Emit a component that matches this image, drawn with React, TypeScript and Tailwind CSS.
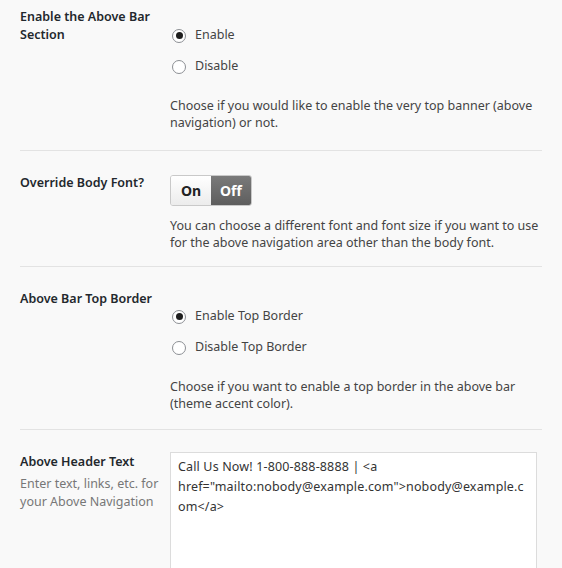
import React from "react";

function Radio({ label, checked }: { label: string; checked?: boolean }) {
  return (
    <label className="flex items-center h-[31px]">
      <span className="ml-[2px] w-[14px] h-[14px] rounded-full border border-[#8c8f94] bg-white flex items-center justify-center">
        {checked && <span className="w-[7px] h-[7px] rounded-full bg-[#1e1e1e]" />}
      </span>
      <span className="ml-[9px]">{label}</span>
    </label>
  );
}

function Row({
  label,
  sub,
  children,
  last,
}: {
  label: string;
  sub?: string;
  children: React.ReactNode;
  last?: boolean;
}) {
  return (
    <div className={`grid grid-cols-[150px_1fr] ${last ? "" : "border-b border-[#e3e3e3]"}`}>
      <div className="pt-[23px] pr-1">
        <div className="font-semibold text-[#23282d] leading-[18px]">{label}</div>
        {sub && <div className="mt-[4px] text-[#777] leading-[18px]">{sub}</div>}
      </div>
      {children}
    </div>
  );
}

export default function App() {
  return (
    <div
      className="min-h-[568px] bg-[#f9f9f9] text-[12.5px] text-[#444] overflow-hidden"
      style={{ fontFamily: '"Noto Sans", "Open Sans", sans-serif' }}
    >
      <div className="w-[542px] pl-5 -mt-[15px]">
        <Row label="Enable the Above Bar Section">
          <div className="pt-[35px] pb-[19px]">
            <Radio label="Enable" checked />
            <Radio label="Disable" />
            <p className="mt-[15px] leading-[17px]">
              Choose if you would like to enable the very top banner (above navigation) or not.
            </p>
          </div>
        </Row>
        <Row label="Override Body Font?">
          <div className="pt-[24px] pb-[15px]">
            <div className="flex w-[82px] h-[31px] rounded-[3px] border border-[#c9c9c9] overflow-hidden font-bold text-[14px]">
              <div className="w-[40px] flex items-center justify-center bg-gradient-to-b from-white to-[#ececec] text-[#222]">
                On
              </div>
              <div className="flex-1 flex items-center justify-center bg-gradient-to-b from-[#7a7a7a] to-[#5e5e5e] text-white">
                Off
              </div>
            </div>
            <p className="mt-[11px] leading-[17px]">
              You can choose a different font and font size if you want to use for the above navigation area other than the body font.
            </p>
          </div>
        </Row>
        <Row label="Above Bar Top Border">
          <div className="pt-[34px] pb-[17px]">
            <Radio label="Enable Top Border" checked />
            <Radio label="Disable Top Border" />
            <p className="mt-[15px] leading-[17px]">
              Choose if you want to enable a top border in the above bar (theme accent color).
            </p>
          </div>
        </Row>
        <Row label="Above Header Text" sub="Enter text, links, etc. for your Above Navigation" last>
          <div className="pt-[22px]">
            <textarea
              className="block w-[367px] h-[140px] bg-white border border-[#dcdcdc] px-[7px] py-[4px] text-[12.5px] tracking-[0.15px] leading-[20px] text-[#333] resize-none outline-none"
              style={{ fontFamily: '"Noto Sans", "Open Sans", sans-serif' }}
              defaultValue={'Call Us Now! 1-800-888-8888 | <a href="mailto:nobody@example.com">nobody@example.com</a>'}
            />
          </div>
        </Row>
      </div>
    </div>
  );
}
